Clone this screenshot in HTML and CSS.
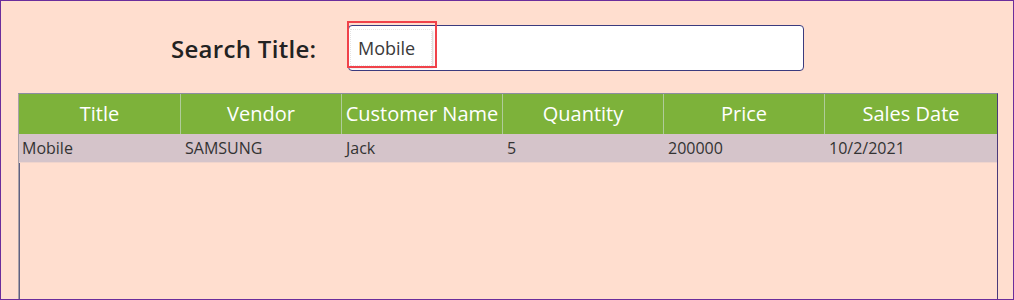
FILE: index.html
```html
<!DOCTYPE html>
<html lang="en">
<head>
    <meta charset="UTF-8">
    <title>Search Sales</title>
    <link rel="stylesheet" href="styles.css">
</head>
<body>
    <div class="screen">
        <div class="search-row">
            <label class="search-label" for="searchTitle">Search Title:</label>
            <div class="search-box">
                <div class="search-chip" id="searchTitle">Mobile</div>
                <div class="highlight"></div>
            </div>
        </div>

        <div class="grid">
            <div class="grid-head">
                <div class="cell first">Title</div>
                <div class="cell">Vendor</div>
                <div class="cell">Customer Name</div>
                <div class="cell">Quantity</div>
                <div class="cell">Price</div>
                <div class="cell last">Sales Date</div>
            </div>
            <div class="grid-row">
                <div class="cell first">Mobile</div>
                <div class="cell">SAMSUNG</div>
                <div class="cell">Jack</div>
                <div class="cell">5</div>
                <div class="cell">200000</div>
                <div class="cell last">10/2/2021</div>
            </div>
        </div>
    </div>
</body>
</html>
```

FILE: styles.css
```css
body {
    margin: 0;
    font-family: "Open Sans", "Liberation Sans", sans-serif;
}

.screen {
    width: 1014px;
    height: 300px;
    box-sizing: border-box;
    border: 1px solid #6b2d9c;
    background-color: #ffdecf;
    overflow: hidden;
}

.search-row {
    display: flex;
    align-items: center;
    padding: 23px 0 0 170px;
    height: 47px;
}

.search-label {
    font-size: 24px;
    font-weight: 600;
    letter-spacing: 0.3px;
    color: #222222;
    width: 177px;
    margin-top: 2px;
}

.search-box {
    position: relative;
    width: 456px;
    height: 46px;
    box-sizing: border-box;
    border: 1px solid #3b3b7e;
    border-radius: 4px;
    background-color: #ffffff;
}

.search-chip {
    position: absolute;
    left: 1px;
    top: 3px;
    width: 82px;
    height: 37px;
    box-sizing: border-box;
    padding-left: 7px;
    line-height: 37px;
    font-size: 18px;
    color: #3a3a3a;
    background-color: #ffffff;
    border: 1px dotted #e4e4e4;
    box-shadow: 1px 2px 2px rgba(120, 100, 100, 0.3);
}

.highlight {
    position: absolute;
    left: -2px;
    top: -5px;
    width: 90px;
    height: 47px;
    box-sizing: border-box;
    border: 2px solid #f0424a;
}

.grid {
    margin: 22px 0 0 17px;
    width: 980px;
    height: 220px;
    box-sizing: border-box;
    border-top: 1px solid #8c8ca0;
    border-left: 1px solid #a8a0a8;
    border-right: 1px solid #4a3a7a;
    box-shadow: inset 1px 0 0 #606080;
}

.grid-head,
.grid-row {
    display: grid;
    grid-template-columns: 162px 161px 161px 161px 161px 1fr;
}

.grid-head {
    height: 40px;
    background-color: #7db23a;
}

.grid-head .cell {
    color: #ffffff;
    font-size: 20px;
    line-height: 40px;
    text-align: center;
    border-right: 1px solid #b0cc9a;
    white-space: nowrap;
    overflow: hidden;
}

.grid-head .cell.last {
    border-right: none;
}

.grid-row {
    height: 28px;
    background-color: #d5c4ca;
    border-bottom: 1px solid #f0d4cc;
}

.grid-row .cell {
    color: #333333;
    font-size: 16px;
    line-height: 28px;
    padding-left: 4px;
}

.grid-row .cell.first {
    padding-left: 3px;
}
```
